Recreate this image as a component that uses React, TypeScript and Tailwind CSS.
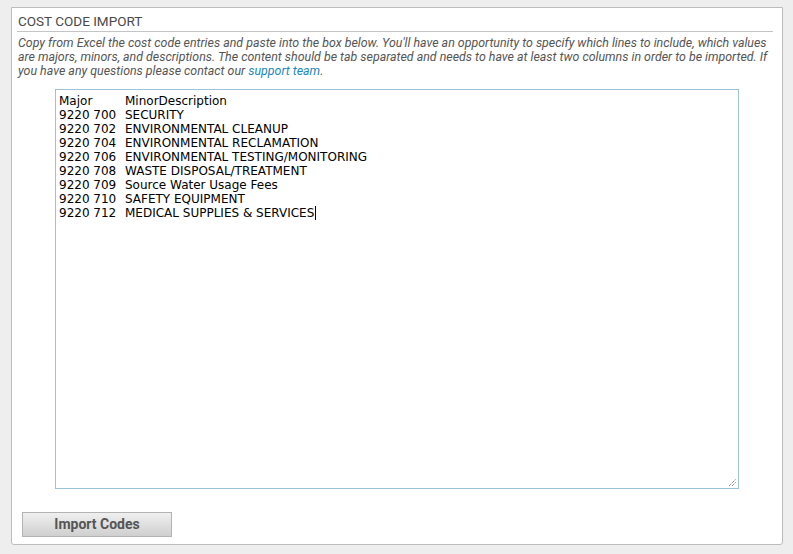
import React from "react";

const rows: [string, string][] = [
  ["9220 700", "SECURITY"],
  ["9220 702", "ENVIRONMENTAL CLEANUP"],
  ["9220 704", "ENVIRONMENTAL RECLAMATION"],
  ["9220 706", "ENVIRONMENTAL TESTING/MONITORING"],
  ["9220 708", "WASTE DISPOSAL/TREATMENT"],
  ["9220 709", "Source Water Usage Fees"],
  ["9220 710", "SAFETY EQUIPMENT"],
  ["9220 712", "MEDICAL SUPPLIES & SERVICES"],
];

export default function App() {
  return (
    <div className="w-[793px] h-[554px] bg-[#eeeeee] pt-[7px] pl-[11px] font-['Roboto',sans-serif]">
      <div className="w-[772px] h-[538px] bg-white border border-[#bcbcbc] rounded-b-[3px] flex flex-col px-[5px]">
        <h2 className="mt-[5px] h-[19px] border-b border-[#c4c4c4] text-[13.5px] leading-[17px] text-[#4a4a4a] pl-[1px] mr-[4px]">
          COST CODE IMPORT
        </h2>
        <p className="mt-[4px] pl-[1px] pr-[4px] text-[12.4px] leading-[14px] italic text-[#555555]">
          Copy from Excel the cost code entries and paste into the box below. You'll have an opportunity to specify which lines to include, which values are majors, minors, and descriptions. The content should be tab separated and needs to have at least two columns in order to be imported. If you have any questions please contact our{" "}
          <a className="text-[#1a87c0]" href="#">
            support team
          </a>
          .
        </p>
        <div className="mt-[11px] ml-[38px] relative w-[684px] h-[400px] border border-[#9dc3db] bg-white pl-[3px] pt-[4px] font-['DejaVu_Sans',sans-serif] text-[12px] leading-[14px] text-black">
          <div className="flex whitespace-pre">
            <span className="w-[66px]">Major</span>
            <span>MinorDescription</span>
          </div>
          {rows.map(([code, desc], i) => (
            <div key={code} className="flex whitespace-pre">
              <span className="w-[66px]">{code}</span>
              <span>{desc}</span>
              {i === rows.length - 1 && (
                <span className="inline-block w-px h-[14px] bg-black ml-[1px]" />
              )}
            </div>
          ))}
          <svg className="absolute right-[1px] bottom-[1px]" width="10" height="10" viewBox="0 0 10 10">
            <path d="M2 9 L9 2 M5 9 L9 5" stroke="#555" strokeWidth="1" strokeDasharray="1 1" />
          </svg>
        </div>
        <div className="mt-[23px] ml-[5px]">
          <button className="w-[150px] h-[25px] border border-[#b3b3b3] bg-gradient-to-b from-[#f0f0f0] to-[#cfcfcf] text-[14px] font-bold text-[#555555]">
            Import Codes
          </button>
        </div>
      </div>
    </div>
  );
}
